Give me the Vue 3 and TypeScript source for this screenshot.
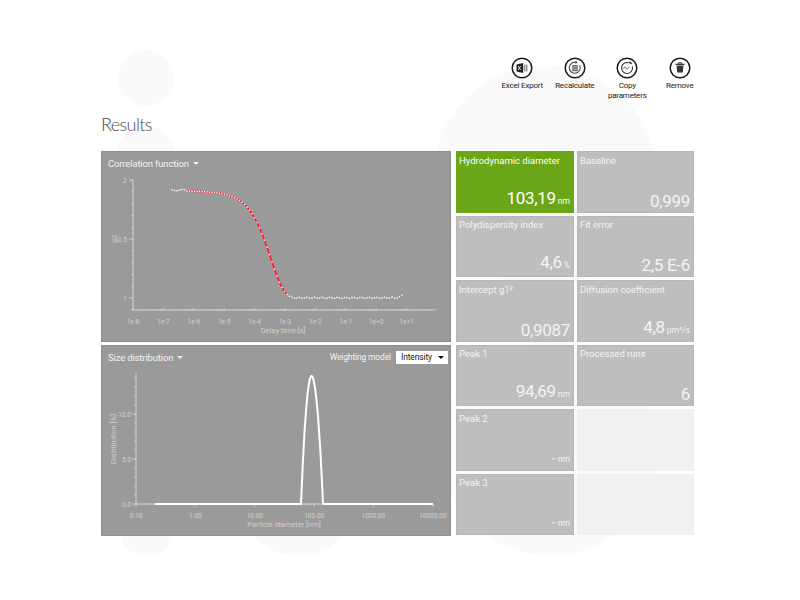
<script setup lang="ts">
const actions = [
  { id: 'excel', label: 'Excel Export' },
  { id: 'recalc', label: 'Recalculate' },
  { id: 'copy', label: 'Copy parameters' },
  { id: 'remove', label: 'Remove' },
]
interface Tile { label: string; value?: string; unit?: string; kind?: string }
const tiles: Tile[] = [
  { label: 'Hydrodynamic diameter', value: '103,19', unit: 'nm', kind: 'active' },
  { label: 'Baseline', value: '0,999' },
  { label: 'Polydispersity index', value: '4,6', unit: '%' },
  { label: 'Fit error', value: '2,5 E-6' },
  { label: 'Intercept g1²', value: '0,9087' },
  { label: 'Diffusion coefficient', value: '4,8', unit: 'µm²/s' },
  { label: 'Peak 1', value: '94,69', unit: 'nm' },
  { label: 'Processed runs', value: '6' },
  { label: 'Peak 2', value: '–', unit: 'nm', kind: 'dash' },
  { label: '', kind: 'empty' },
  { label: 'Peak 3', value: '–', unit: 'nm', kind: 'dash' },
  { label: '', kind: 'empty' },
]
// chart coordinates are panel-local (panel origin 101,151 and 101,345)
const xTicks1 = ['1e-8', '1e-7', '1e-6', '1e-5', '1e-4', '1e-3', '1e-2', '1e-1', '1e+0', '1e+1'].map((t, i) => ({ t, x: 32 + i * 30.4 }))
const minor = (x0: number, step: number, n: number) => {
  const out: number[] = []
  for (let i = 0; i < n; i++) for (const m of [2, 3, 4, 5, 6, 7, 8, 9]) out.push(x0 + (i + Math.log10(m)) * step)
  return out
}
const minor1 = minor(32, 30.4, 10)
const minor2 = minor(35, 59.4, 5)
const g = (x: number) => 147 - 107 * Math.exp(-0.69 * Math.pow(10, (x - 165) / 30.4))
const pts: { x: number; y: number }[] = []
for (let x = 71; x <= 302; x += 2.5) {
  let y = g(x)
  if (x < 84) y = 39.2 + Math.sin(x * 2) * 0.7
  else if (x > 190) y = 146.8 + Math.sin(x * 1.7) * 0.6
  if (x > 298) y = 146 - (x - 298) * 0.6
  pts.push({ x, y })
}
const fit = pts.filter(p => p.x > 84 && p.x < 187)
const y1 = [{ t: '2', y: 29 }, { t: '1.5', y: 88 }, { t: '1', y: 147 }]
const y1Minor = Array.from({ length: 12 }, (_, i) => 29 + i * 11.8)
const xTicks2 = ['0.10', '1.00', '10.00', '100.00', '1000.00', '10000.00'].map((t, i) => ({ t, x: 35 + i * 59.4 }))
const y2 = [{ t: '0.0', y: 159 }, { t: '5.0', y: 114 }, { t: '10.0', y: 69 }]
const y2Minor = Array.from({ length: 15 }, (_, i) => 159 - i * 9)
const peak: string[] = []
for (let i = 0; i <= 40; i++) {
  const x = 200 + (i / 40) * 23
  const u = (x - 210.5) / 11.5
  const asym = x < 210.5 ? (x - 210.5) / 10.5 : u
  peak.push(`${x.toFixed(1)},${(159 - 128 * Math.max(0, 1 - asym * asym)).toFixed(1)}`)
}
const dist = `54,159 ${peak.join(' ')} 332,159`
</script>

<template>
  <div class="page">
    <i class="blob blob-a"></i>
    <i class="blob blob-b"></i>
    <i class="blob blob-c"></i>
    <i class="blob blob-d"></i>
    <i class="blob blob-e"></i>
    <i class="blob blob-f"></i>
    <div class="content">
      <div class="toolbar">
        <button v-for="a in actions" :key="a.id" class="action" type="button">
          <svg width="22" height="22" viewBox="0 0 22 22">
            <circle cx="11" cy="11" r="9.8" fill="#fff" stroke="#1a1a1a" stroke-width="1.5" />
            <g v-if="a.id === 'excel'">
              <path d="M5.500 7.500l6.500-1.500v10l-6.500-1.500z" fill="#222" />
              <path d="M7.200 9l2.400 4M9.600 9l-2.400 4" stroke="#fff" stroke-width=".8" />
              <rect x="12.500" y="7.500" width="4" height="7" fill="#999" />
              <path d="M14.500 7.500v7" stroke="#eee" stroke-width=".6" />
            </g>
            <g v-else-if="a.id === 'recalc'">
              <path d="M15.800 8.500a5.500 5.500 0 1 1-3.300-3" fill="none" stroke="#555" stroke-width="1.200" />
              <path d="M11.500 3.800l2.200 1.700-2.200 1.500z" fill="#444" />
              <rect x="8.300" y="8" width="5.400" height="6.200" fill="#666" />
              <path d="M9 9.500h4M9 11h4M9 12.500h4" stroke="#ccc" stroke-width=".6" />
            </g>
            <g v-else-if="a.id === 'copy'">
              <path d="M16.300 9.500a5.500 5.500 0 1 1-3-3.500" fill="none" stroke="#333" stroke-width="1.100" />
              <path d="M13.500 4.800l2 2.200" stroke="#222" stroke-width="1.300" />
              <path d="M7.500 12c1-2.500 1.800-2.500 2.600-1s1.700 1 3-1.500" fill="none" stroke="#444" stroke-width=".9" />
            </g>
            <g v-else>
              <path d="M6.500 7.300h9" stroke="#222" stroke-width="1.200" />
              <path d="M9.500 7V5.800h3V7" fill="none" stroke="#222" stroke-width=".9" />
              <path d="M7.500 8.500h7l-.8 7h-5.400z" fill="#333" />
            </g>
          </svg>
          <span>{{ a.label }}</span>
        </button>
      </div>
      <h1>Results</h1>
      <div class="results">
        <div class="charts">
          <section class="panel">
            <header class="panel-head">
              <span class="menu">Correlation function <b class="caret"></b></span>
            </header>
            <svg class="plot" width="350" height="191" viewBox="0 0 350 191">
              <g stroke="#d4d4d4" fill="none">
                <path d="M32 29V159H332" stroke-width="1" />
                <path v-for="y in y1Minor" :key="y" :d="`M30 ${y}h2`" stroke-width=".7" />
                <path v-for="x in minor1" :key="x" :d="`M${x.toFixed(1)} 158v1.500`" stroke-width=".7" />
                <path v-for="t in xTicks1" :key="t.t" :d="`M${t.x} 157v3`" stroke-width=".8" />
                <path v-for="t in y1" :key="t.t" :d="`M28 ${t.y}h4`" stroke-width=".8" />
              </g>
              <g class="tick">
                <text v-for="t in xTicks1" :key="t.t" :x="t.x" y="172.500" text-anchor="middle">{{ t.t }}</text>
                <text v-for="t in y1" :key="t.t" x="26" :y="t.y + 2.500" text-anchor="end">{{ t.t }}</text>
              </g>
              <text class="axis" x="182" y="182" text-anchor="middle">Delay time [s]</text>
              <text class="axis" transform="translate(16 88) rotate(-90)" text-anchor="middle">g2</text>
              <polyline :points="fit.map(p => `${p.x},${p.y}`).join(' ')" fill="none" stroke="#ff1a30" stroke-width="1.600" />
              <rect v-for="p in pts" :key="p.x" :x="p.x - 0.700" :y="p.y - 0.700" width="1.400" height="1.400" fill="#fff" />
            </svg>
          </section>
          <section class="panel">
            <header class="panel-head">
              <span class="menu">Size distribution <b class="caret"></b></span>
              <span class="weight">
                Weighting model
                <span class="select">Intensity <b class="caret dark"></b></span>
              </span>
            </header>
            <svg class="plot" width="350" height="191" viewBox="0 0 350 191">
              <g stroke="#d4d4d4" fill="none">
                <path d="M35 28V159H332" stroke-width="1" />
                <path v-for="y in y2Minor" :key="y" :d="`M33 ${y}h2`" stroke-width=".7" />
                <path v-for="x in minor2" :key="x" :d="`M${x.toFixed(1)} 159v1.500`" stroke-width=".7" />
                <path v-for="t in xTicks2" :key="t.t" :d="`M${t.x} 159v3`" stroke-width=".8" />
                <path v-for="t in y2" :key="t.t" :d="`M31 ${t.y}h4`" stroke-width=".8" />
              </g>
              <g class="tick">
                <text v-for="t in xTicks2" :key="t.t" :x="t.x" y="172.500" text-anchor="middle">{{ t.t }}</text>
                <text v-for="t in y2" :key="t.t" x="30" :y="t.y + 2.500" text-anchor="end">{{ t.t }}</text>
              </g>
              <text class="axis" x="183" y="182" text-anchor="middle">Particle diameter [nm]</text>
              <text class="axis" transform="translate(15 94) rotate(-90)" text-anchor="middle">Distribution [%]</text>
              <polyline :points="dist" fill="none" stroke="#fff" stroke-width="2" stroke-linejoin="round" />
            </svg>
          </section>
        </div>
        <div class="tiles">
          <div v-for="(t, i) in tiles" :key="i" class="tile" :class="t.kind">
            <template v-if="t.kind !== 'empty'">
              <span class="label">{{ t.label }}</span>
              <span class="value">
                <span class="num">{{ t.value }}</span><span v-if="t.unit" class="unit">{{ t.unit }}</span>
              </span>
            </template>
          </div>
        </div>
      </div>
    </div>
  </div>
</template>

<style>
html, body { margin: 0; background: #fff; }
</style>

<style scoped>
.page {
  position: relative;
  width: 800px;
  height: 600px;
  overflow: hidden;
  background: #fff;
  font-family: Roboto, Lato, sans-serif;
}
.blob {
  position: absolute;
  border-radius: 50%;
  background: #fafafa;
}
.blob-a { left: 118px; top: 50px; width: 56px; height: 56px; }
.blob-b { left: 118px; top: 125px; width: 56px; height: 56px; }
.blob-c { left: 434px; top: 65px; width: 222px; height: 222px; }
.blob-d { left: 442px; top: 342px; width: 214px; height: 214px; }
.blob-e { left: 119px; top: 500px; width: 56px; height: 56px; }
.blob-f { left: 239px; top: 438px; width: 118px; height: 118px; }
.content {
  position: relative;
  padding: 57px 107px 0 101px;
}
.toolbar {
  display: flex;
  justify-content: flex-end;
  height: 48px;
  margin-right: -13px;
}
.action {
  display: flex;
  flex-direction: column;
  align-items: center;
  width: 52.500px;
  padding: 0;
  border: 0;
  background: none;
  font: inherit;
  font-size: 8px;
  line-height: 10px;
  letter-spacing: -0.2px;
  color: #222;
  text-align: center;
}
.action span { margin-top: 2px; width: 48px; }
h1 {
  margin: 8px 0 0;
  height: 38px;
  font-family: Lato, Roboto, sans-serif;
  font-size: 18px;
  line-height: 22px;
  font-weight: 300;
  letter-spacing: -0.6px;
  color: #4a4a4a;
}
.results {
  display: flex;
  gap: 5px;
  height: 385px;
}
.charts {
  display: flex;
  flex-direction: column;
  gap: 3px;
  width: 350px;
}
.panel {
  position: relative;
  height: 191px;
  background: #9a9a9a;
  box-shadow: inset 0 0 0 1px #8e8e8e;
}
.panel-head {
  position: absolute;
  left: 7px;
  right: 3px;
  top: 5px;
  display: flex;
  justify-content: space-between;
  align-items: center;
  height: 14px;
  font-size: 9.500px;
  letter-spacing: -0.15px;
  color: #f2f2f2;
}
.plot { display: block; }
.menu { display: inline-flex; align-items: center; gap: 4px; }
.caret {
  display: inline-block;
  width: 0;
  height: 0;
  border-left: 3px solid transparent;
  border-right: 3px solid transparent;
  border-top: 3px solid #f0f0f0;
}
.caret.dark { border-top-color: #111; }
.weight { display: inline-flex; align-items: center; gap: 5px; font-size: 8.500px; }
.select {
  display: flex;
  align-items: center;
  justify-content: space-between;
  width: 52px;
  height: 13px;
  box-sizing: border-box;
  padding: 0 4px 0 5px;
  background: #fff;
  color: #222;
  font-size: 8.500px;
}
.tick { fill: #d2d2d2; font-size: 6.500px; }
.axis { fill: #cfcfcf; font-size: 7.500px; }
.tiles {
  display: grid;
  grid-template-columns: 118px 117px;
  grid-template-rows: repeat(6, 61.500px);
  gap: 3px;
}
.tile {
  position: relative;
  display: flex;
  flex-direction: column;
  justify-content: space-between;
  box-sizing: border-box;
  padding: 3.500px 4px 1px 3px;
  background: #bebebe;
  box-shadow: inset 0 0 0 1px #b7b7b7;
  color: #f3f3f3;
}
.tile.active { background: #6ba518; color: #fff; box-shadow: none; }
.tile.empty { background: #f0f0f0; box-shadow: none; }
.label { font-size: 9.500px; line-height: 12px; }
.value {
  display: flex;
  justify-content: flex-end;
  align-items: baseline;
  gap: 2px;
  line-height: 22px;
}
.num { font-size: 17px; font-weight: 400; letter-spacing: -0.3px; }
.unit { font-size: 8.500px; }
.dash .num { font-size: 8.500px; }
</style>
